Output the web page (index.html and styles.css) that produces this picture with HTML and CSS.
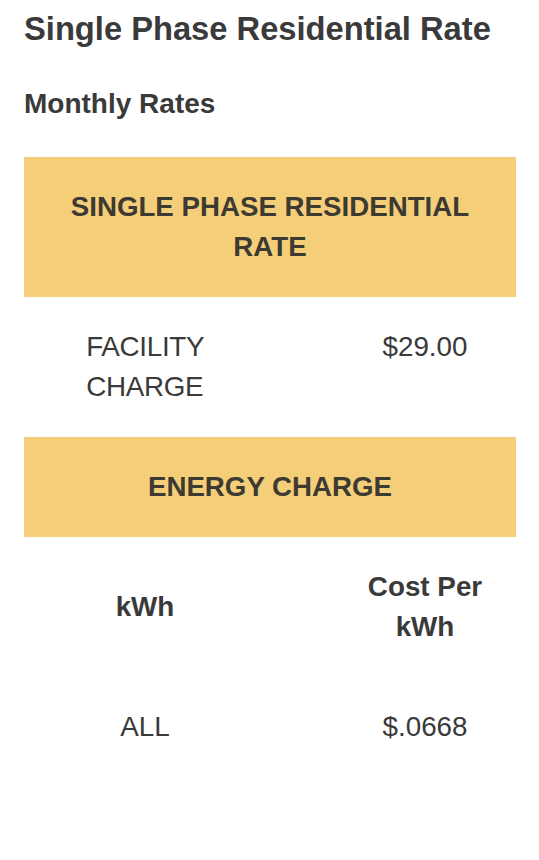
FILE: index.html
```html
<!DOCTYPE html>
<html lang="en">
<head>
<meta charset="utf-8">
<title>Single Phase Residential Rate</title>
<link rel="stylesheet" href="styles.css">
</head>
<body>
<main class="page">
  <h1 class="title">Single Phase Residential Rate</h1>
  <h2 class="subtitle">Monthly Rates</h2>
  <section class="rates">
    <div class="band">SINGLE PHASE RESIDENTIAL RATE</div>
    <div class="row row-top">
      <div class="cell"><span class="stack">FACILITY CHARGE</span></div>
      <div class="cell">$29.00</div>
    </div>
    <div class="band">ENERGY CHARGE</div>
    <div class="row">
      <div class="cell head">kWh</div>
      <div class="cell head">Cost Per kWh</div>
    </div>
    <div class="row">
      <div class="cell">ALL</div>
      <div class="cell">$.0668</div>
    </div>
  </section>
</main>
</body>
</html>
```
FILE: styles.css
```css
html, body {
  margin: 0;
  padding: 0;
  background: #ffffff;
}
body {
  font-family: "Liberation Sans", Arial, sans-serif;
  color: #3a3a3a;
}
.page {
  padding: 10px 23px 0 24px;
}
.title {
  margin: 0;
  font-size: 32.7px;
  line-height: 38px;
  font-weight: 700;
  color: #3a3a3a;
  white-space: nowrap;
}
.subtitle {
  margin: 39px 0 0;
  font-size: 28px;
  line-height: 1.2;
  font-weight: 700;
  color: #3a3a3a;
}
.rates {
  margin-top: 36px;
  display: flex;
  flex-direction: column;
}
.band {
  background: #f5ce7a;
  color: #3c3a31;
  font-size: 27.7px;
  font-weight: 700;
  line-height: 40px;
  text-align: center;
  padding: 30px 22px;
}
.row {
  display: grid;
  grid-template-columns: 242px 150px;
  column-gap: 84px;
  align-items: center;
}
.row-top {
  align-items: start;
}
.cell {
  font-size: 27.8px;
  line-height: 40px;
  text-align: center;
  padding: 30px 0;
  color: #3a3a3a;
}
.cell.head {
  font-weight: 700;
}
.stack {
  display: inline-block;
  width: min-content;
  text-align: left;
  letter-spacing: -0.3px;
}
```
